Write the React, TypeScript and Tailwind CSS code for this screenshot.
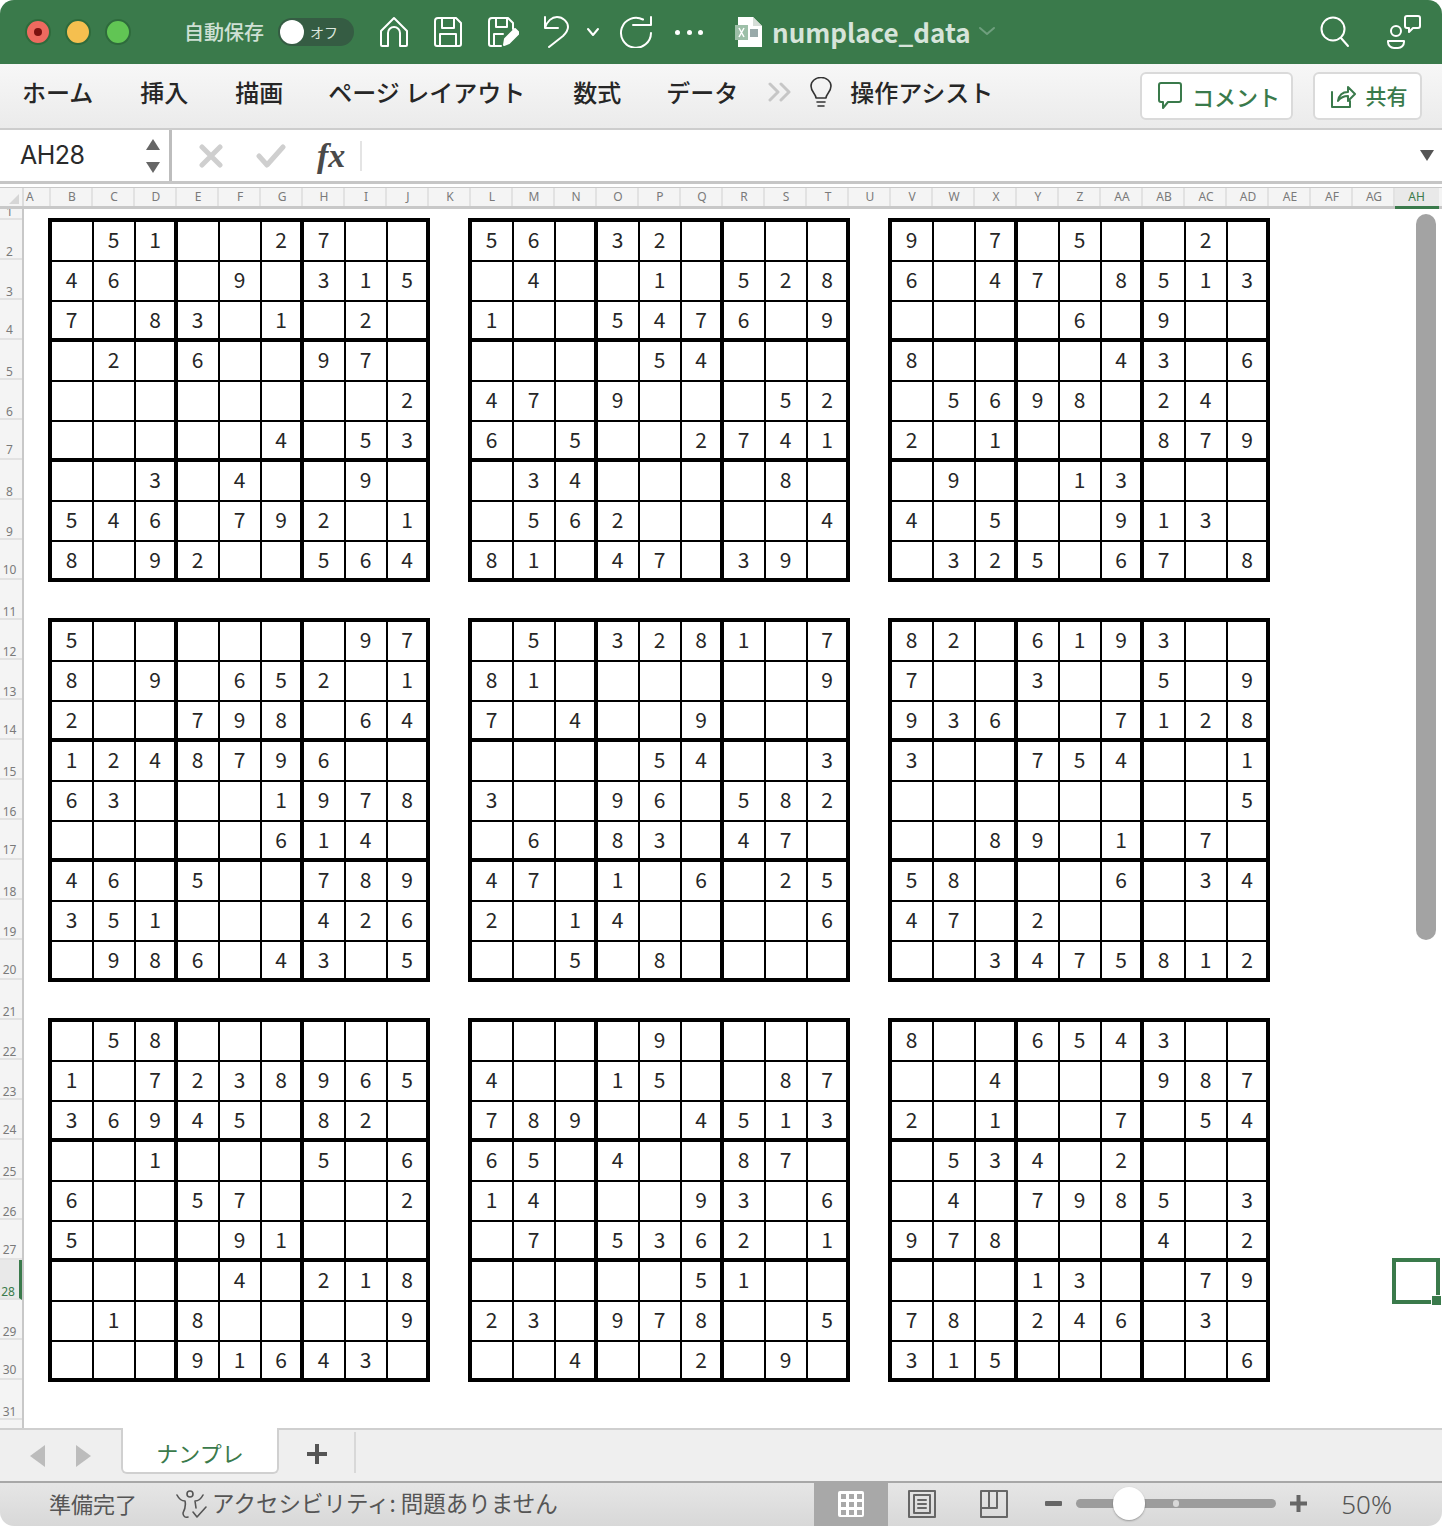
import React from "react";

const boards: string[][] = [
  [".51..27..","46..9.315","7.83.1.2.",".2.6..97.","........2",".....4.53","..3.4..9.","546.792.1","8.92..564"],
  ["56.32....",".4..1.528","1..5476.9","....54...","47.9...52","6.5..2741",".34....8.",".562....4","81.47.39."],
  ["9.7.5..2.","6.47.8513","....6.9..","8....43.6",".5698.24.","2.1...879",".9..13...","4.5..913.",".325.67.8"],
  ["5......97","8.9.652.1","2..798.64","1248796..","63...1978",".....614.","46.5..789","351...426",".986.43.5"],
  [".5.3281.7","81......9","7.4..9...","....54..3","3..96.582",".6.83.47.","47.1.6.25","2.14....6","..5.8...."],
  ["82.6193..","7..3..5.9","936..7128","3..754..1","........5","..89.1.7.","58...6.34","47.2.....","..3475812"],
  [".58......","1.7238965","36945.82.","..1...5.6","6..57...2","5...91...","....4.218",".1.8....9","...91643."],
  ["....9....","4..15..87","789..4513","65.4..87.","14...93.6",".7.5362.1",".....51..","23.978..5","..4..2.9."],
  ["8..6543..","..4...987","2.1..7.54",".534.2...",".4.7985.3","978...4.2","...13..79","78.246.3.","315.....6"],
];

const cols = ["B","C","D","E","F","G","H","I","J","K","L","M","N","O","P","Q","R","S","T","U","V","W","X","Y","Z","AA","AB","AC","AD","AE","AF","AG"];
const rows = Array.from({ length: 30 }, (_, i) => i + 2);
const shortRows = [4, 7, 10, 14, 17, 20, 24, 27, 30];
const jp = { fontFamily: '"Noto Sans CJK JP", "Noto Sans", sans-serif' };

function Board({ data }: { data: string[] }) {
  return (
    <div style={jp} className="grid h-[364px] w-[382px] grid-cols-[repeat(8,42px)_38px] grid-rows-[repeat(8,40px)_36px] border-4 border-black">
      {data.flatMap((row, r) =>
        row.split("").map((c, i) => {
          const right = i === 8 ? "" : i === 2 || i === 5 ? "border-r-4" : "border-r-2 pr-[1px]";
          const bottom = r === 8 ? "pb-[1px]" : r === 2 || r === 5 ? "border-b-4 pb-[1px]" : "border-b-2 pb-[3px]";
          return (
            <div key={`${r}-${i}`} className={`flex items-center justify-center border-black text-[21px] leading-none text-[#262626] ${right} ${bottom}`}>
              {c === "." ? "" : c}
            </div>
          );
        })
      )}
    </div>
  );
}

function Ico({ w, h = 32, vb, cls = "", color = "#fff", sw = 2, children }: { w: number; h?: number; vb: string; cls?: string; color?: string; sw?: number; children: React.ReactNode }) {
  return (
    <svg width={w} height={h} viewBox={vb} fill="none" stroke={color} strokeWidth={sw} strokeLinecap="round" strokeLinejoin="round" className={`shrink-0 ${cls}`}>
      {children}
    </svg>
  );
}

export default function App() {
  return (
    <div className="relative flex h-[1526px] w-[1442px] flex-col overflow-hidden rounded-[14px] bg-white font-['Noto_Sans']">
      {/* title bar */}
      <div className="flex h-[64px] shrink-0 items-center bg-[#3a7a4b] pl-[25px] pr-[21px]">
        <div className="flex items-center gap-[14px]">
          <div className="flex h-[26px] w-[26px] items-center justify-center rounded-full border-2 border-[#2e6b3c] bg-[#ee6a5f]">
            <div className="h-[8px] w-[8px] rounded-full bg-[#7c1210]" />
          </div>
          <div className="h-[26px] w-[26px] rounded-full border-2 border-[#2e6b3c] bg-[#f5bf4f]" />
          <div className="h-[26px] w-[26px] rounded-full border-2 border-[#2e6b3c] bg-[#61c554]" />
        </div>
        <span style={jp} className="ml-[53px] text-[20px] font-medium text-[#cfe0d4]">自動保存</span>
        <div className="ml-[14px] flex h-[28px] w-[76px] items-center rounded-full bg-[#355c43] pl-[2px]">
          <div className="h-[24px] w-[24px] rounded-full bg-white" />
          <span style={jp} className="ml-[6px] text-[14px] text-[#dbe6de]">オフ</span>
        </div>
        <Ico w={30} vb="0 0 30 32" cls="ml-[25px]">
          <path d="M2 15 15 2l13 13v14a1 1 0 0 1-1 1h-6V17a6 6 0 0 0-12 0v13H3a1 1 0 0 1-1-1Z" />
        </Ico>
        <Ico w={30} vb="0 0 30 32" cls="ml-[24px]">
          <path d="M5 2h18l5 5v21a2 2 0 0 1-2 2H4a2 2 0 0 1-2-2V5a3 3 0 0 1 3-3Z M9 2v10h12V2 M7 30V18h16v12" />
        </Ico>
        <Ico w={32} vb="0 0 32 32" cls="ml-[24px]">
          <path d="M14 30H4a2 2 0 0 1-2-2V5a3 3 0 0 1 3-3h16l5 5v6 M9 2v9h11V2 M7 30V18h9" />
          <path d="M17 29l1-6L28 13l4 4-10 10Z" fill="#fff" />
        </Ico>
        <Ico w={30} vb="0 0 30 32" cls="ml-[23px]">
          <path d="M3 1v11h13 M3 12C5 5 10 1 15 1c6 0 11 5 11 10 0 4-3 7-5 9L7 31" />
        </Ico>
        <Ico w={14} vb="0 0 14 32" cls="ml-[14px]">
          <path d="M2 13l5 6 5-6" />
        </Ico>
        <Ico w={34} vb="0 0 34 32" cls="ml-[19px]">
          <path d="M24 3.500A15 15 0 1 0 32 17" />
          <path d="M32 1v8H14" />
        </Ico>
        <div className="ml-[22px] flex w-[28px] justify-between">
          <div className="h-[5px] w-[5px] rounded-full bg-white" />
          <div className="h-[5px] w-[5px] rounded-full bg-white" />
          <div className="h-[5px] w-[5px] rounded-full bg-white" />
        </div>
        <svg width="27" height="30" viewBox="0 0 27 30" className="ml-[32px] shrink-0">
          <path d="M3 0h15l9 9v21H3Z" fill="#fff" />
          <path d="M18 0v9h9Z" fill="#d5ddd7" />
          <rect x="0" y="8" width="13" height="15" fill="#9dbfa8" />
          <rect x="15" y="12" width="8" height="8" fill="#9aa" />
          <path d="M4 11l5 9M9 11l-5 9" stroke="#fff" strokeWidth="1.5" />
        </svg>
        <span style={jp} className="ml-[10px] text-[26px] font-bold leading-none text-[#d6e4da]">numplace_data</span>
        <Ico w={18} vb="0 0 18 32" cls="ml-[7px]" color="#6f9f7e">
          <path d="M2 12l7 6 7-6" />
        </Ico>
        <div className="ml-auto flex items-center gap-[37px]">
          <Ico w={30} vb="0 0 30 32">
            <circle cx="13" cy="13" r="11.500" />
            <path d="M21 22l7 8" />
          </Ico>
          <Ico w={34} h={34} vb="0 0 34 34">
            <circle cx="9" cy="16" r="5" />
            <path d="M1 26h16v1a6 6 0 0 1-6 6H7a6 6 0 0 1-6-6Z" />
            <path d="M18 3a2 2 0 0 1 2-2h11a2 2 0 0 1 2 2v8a2 2 0 0 1-2 2h-5l-4 4v-4h-2a2 2 0 0 1-2-2Z" />
          </Ico>
        </div>
      </div>

      {/* ribbon */}
      <div style={jp} className="flex h-[66px] shrink-0 items-center border-b-2 border-[#cdcdcd] bg-gradient-to-b from-[#f7f7f7] to-[#ebebeb] pl-[22px] pr-[20px]">
        <div className="mt-[-8px] flex items-center gap-[46px] text-[24px] font-medium leading-none text-[#262626]">
          <span>ホーム</span>
          <span className="ml-[1px]">挿入</span>
          <span className="ml-[1px]">描画</span>
          <span className="-ml-[1px]">ページ レイアウト</span>
          <span className="ml-[2px]">数式</span>
          <span className="-ml-[1px]">データ</span>
        </div>
        <Ico w={24} h={20} vb="0 0 24 20" cls="ml-[30px] mt-[-8px]" color="#c6c6c6" sw={3}>
          <path d="M2 2l8 8-8 8M13 2l8 8-8 8" />
        </Ico>
        <Ico w={24} h={32} vb="0 0 24 32" cls="ml-[17px] mt-[-6px]" color="#333" sw={1.6}>
          <path d="M7 21c0-4-5-6-5-12a10 8.500 0 0 1 20 0c0 6-5 8-5 12Z M8 25h8 M9 29h6" />
        </Ico>
        <span className="ml-[17px] mt-[-8px] text-[24px] font-medium leading-none text-[#262626]">操作アシスト</span>
        <div className="ml-auto flex items-center gap-[20px]">
          <div className="flex h-[48px] w-[153px] items-center justify-center gap-[10px] rounded-[6px] border-2 border-[#dadada] bg-white pl-[3px] text-[22px] font-medium text-[#3a7a4b]">
            <Ico w={26} h={28} vb="0 0 26 28" color="#3a7a4b">
              <path d="M3 3a2 2 0 0 1 2-2h18a2 2 0 0 1 2 2v15a2 2 0 0 1-2 2H12l-5 6v-6H5a2 2 0 0 1-2-2Z" />
            </Ico>
            <span>コメント</span>
          </div>
          <div className="flex h-[48px] w-[109px] items-center justify-center gap-[10px] rounded-[6px] border-2 border-[#dadada] bg-white pl-[2px] text-[21px] font-medium text-[#3a7a4b]">
            <Ico w={26} h={26} vb="0 0 26 26" color="#3a7a4b">
              <path d="M2 9v15h18v-6 M8 18c1-6 5-9 10-9V4l7 7-7 7v-5c-4 0-7 1-10 5Z" />
            </Ico>
            <span>共有</span>
          </div>
        </div>
      </div>

      {/* formula bar */}
      <div className="flex h-[54px] shrink-0 items-stretch border-b-[3px] border-[#c6c6c6] bg-white">
        <div className="flex w-[172px] items-center border-r-[3px] border-[#bdbdbd] pl-[20px] pr-[9px]">
          <span className="font-['Inter'] text-[25px] leading-none tracking-[-0.5px] text-[#2a2a2a]">AH28</span>
          <div className="ml-auto flex flex-col gap-[12px]">
            <svg width="14" height="11" viewBox="0 0 14 11"><path d="M7 0l7 11H0Z" fill="#666" /></svg>
            <svg width="14" height="11" viewBox="0 0 14 11"><path d="M7 11L0 0h14Z" fill="#666" /></svg>
          </div>
        </div>
        <div className="flex flex-1 items-center pl-[27px] pr-[8px]">
          <Ico w={24} h={24} vb="0 0 24 24" color="#cfcfcf" sw={5}>
            <path d="M3 3l18 18M21 3L3 21" />
          </Ico>
          <Ico w={30} h={24} vb="0 0 30 24" cls="ml-[33px]" color="#cfcfcf" sw={5}>
            <path d="M3 12l8 9L27 3" />
          </Ico>
          <span className="ml-[31px] font-['Liberation_Serif'] text-[34px] font-bold italic leading-none text-[#4a4a4a]">fx</span>
          <div className="ml-[15px] h-[30px] w-[2px] bg-[#e4e4e4]" />
          <svg width="14" height="11" viewBox="0 0 14 11" className="ml-auto"><path d="M7 11L0 0h14Z" fill="#555" /></svg>
        </div>
      </div>

      {/* column headers */}
      <div className="mt-[3px] flex h-[22px] shrink-0 items-center border-y border-b-[3px] border-y-[#c8c8c8] bg-[#f4f4f4] text-[12px] leading-none text-[#7a7a7a]">
        <div className="flex h-full w-[24px] shrink-0 items-end justify-end border-r-2 border-[#dcdcdc] pb-[2px] pr-[3px]">
          <svg width="10" height="10" viewBox="0 0 10 10"><path d="M10 0v10H0Z" fill="#d6d6d6" /></svg>
        </div>
        <div className="flex h-full w-[27px] shrink-0 items-center border-r-2 border-[#e2e2e2] pl-[2px]">A</div>
        {cols.map((c) => (
          <div key={c} className="flex h-full w-[42px] shrink-0 items-center justify-center border-r-2 border-[#e2e2e2] pl-[2px]">{c}</div>
        ))}
        <div className="flex h-[21px] w-[44px] shrink-0 items-center justify-center self-start border-b-[3px] border-[#3a7a4b] bg-[#e9e9e9] pr-[1px] text-[#3a7a4b]">AH</div>
      </div>

      {/* sheet */}
      <div className="flex min-h-0 flex-1">
        <div className="flex w-[24px] shrink-0 flex-col overflow-hidden border-r-2 border-[#c8c8c8] bg-[#f4f4f4] text-[12px] leading-none text-[#7a7a7a]">
          <div className="flex h-[11px] shrink-0 items-end justify-center overflow-hidden border-b-2 border-[#e2e2e2] pr-[3px]">1</div>
          {rows.map((r) => (
            <div key={r} className={`flex h-[40px] shrink-0 items-end justify-center border-b-2 border-[#e2e2e2] pr-[3px] ${shortRows.includes(r) ? "pb-[2px]" : ""} ${r === 28 ? "border-r-[3px] border-r-[#3a7a4b] bg-[#e9e9e9] text-[#3a7a4b]" : ""}`}>{r}</div>
          ))}
        </div>
        <div className="grid flex-1 grid-cols-[repeat(3,382px)] content-start gap-x-[38px] gap-y-[36px] pl-[24px] pt-[9px]">
          {boards.map((b, i) => (
            <Board key={i} data={b} />
          ))}
        </div>
      </div>

      {/* tabs */}
      <div className="flex h-[53px] shrink-0 items-stretch border-t-2 border-[#cfcfcf] bg-[#efefef]">
        <div className="flex w-[121px] shrink-0 items-center pl-[30px]">
          <svg width="15" height="22" viewBox="0 0 15 22"><path d="M15 0v22L0 11Z" fill="#bcbcbc" /></svg>
          <svg width="15" height="22" viewBox="0 0 15 22" className="ml-[31px]"><path d="M0 0v22l15-11Z" fill="#bcbcbc" /></svg>
        </div>
        <div style={jp} className="-mt-[2px] flex h-[46px] w-[158px] items-center justify-center rounded-b-[6px] border-x-2 border-b-2 border-[#d0d0d0] bg-white pt-[5px] text-[22px] text-[#3a7a4b]">ナンプレ</div>
        <div className="my-[2px] mb-[8px] flex w-[77px] items-center justify-center border-r-2 border-[#d8d8d8] pt-[2px]">
          <svg width="20" height="20" viewBox="0 0 20 20"><path d="M8 0h4v8h8v4h-8v8H8v-8H0V8h8Z" fill="#555" /></svg>
        </div>
      </div>

      {/* status */}
      <div style={jp} className="flex h-[45px] shrink-0 items-center border-t-2 border-[#a8a8a8] bg-gradient-to-b from-[#e6e6e6] to-[#d8d8d8] pl-[49px] pr-[50px] text-[22px] leading-none text-[#555]">
        <span className="-mt-[4px]">準備完了</span>
        <Ico w={32} h={30} vb="0 0 32 30" cls="ml-[39px]" color="#555" sw={1.6}>
          <circle cx="14" cy="4" r="3" />
          <path d="M1 5c2 4 5 6 8 6 1 4 0 8-2 12 0 3 2 5 5 4 M27 5c-2 4-5 6-8 6l1 7" />
          <path d="M17 22l4 5 9-10" />
        </Ico>
        <span className="-mt-[4px] ml-[4px] text-[22.500px]">アクセシビリティ: 問題ありません</span>
        <div className="ml-auto flex h-full w-[74px] shrink-0 items-center justify-center bg-[#a8a8a8]">
          <svg width="26" height="26" viewBox="0 0 26 26" fill="#a8a8a8" className="-mt-[2px]">
            <rect width="26" height="26" rx="2" fill="#fff" />
            {[3, 11, 19].flatMap((x) => [3, 11, 19].map((y) => <rect key={`${x}-${y}`} x={x} y={y} width="5" height="5" />))}
          </svg>
        </div>
        <Ico w={28} h={28} vb="0 0 28 28" cls="ml-[20px] -mt-[2px]" color="#666">
          <rect x="1" y="1" width="26" height="26" />
          <rect x="6" y="5" width="16" height="18" />
          <path d="M10 10h8M10 14h8M10 18h8" />
        </Ico>
        <Ico w={28} h={28} vb="0 0 28 28" cls="ml-[44px] -mt-[2px]" color="#666">
          <path d="M1 1h26v26H1Z M1 18h16V1 M9 1v17" />
        </Ico>
        <div className="-mt-[2px] ml-[37px] h-[5px] w-[17px] rounded-[1px] bg-[#666]" />
        <div className="relative -mt-[2px] ml-[14px] flex h-[9px] w-[200px] items-center rounded-full bg-[#9c9c9c]">
          <div className="absolute left-[37px] top-[-12px] h-[33px] w-[32px] rounded-full bg-white shadow-[0_1px_2px_rgba(0,0,0,0.3)]" />
          <div className="absolute left-[97px] top-[1px] h-[7px] w-[6px] rounded-full bg-[#d8d8d8]" />
        </div>
        <svg width="17" height="17" viewBox="0 0 17 17" className="-mt-[2px] ml-[14px] shrink-0"><path d="M6.500 0h4v6.500H17v4h-6.500V17h-4v-6.500H0v-4h6.500Z" fill="#666" /></svg>
        <span className="-mt-[2px] ml-[34px] whitespace-nowrap font-['Noto_Sans'] text-[26px] font-light">50%</span>
      </div>

      {/* overlays */}
      <div className="absolute left-[1416px] top-[214px] h-[726px] w-[20px] rounded-full bg-[#a3a3a3]" />
      <div className="absolute left-[1392px] top-[1258px] h-[46px] w-[48px] border-4 border-[#3a7a4b]" />
      <div className="absolute left-[1431px] top-[1295px] h-[11px] w-[11px] border border-white bg-[#3a7a4b]" />
    </div>
  );
}
